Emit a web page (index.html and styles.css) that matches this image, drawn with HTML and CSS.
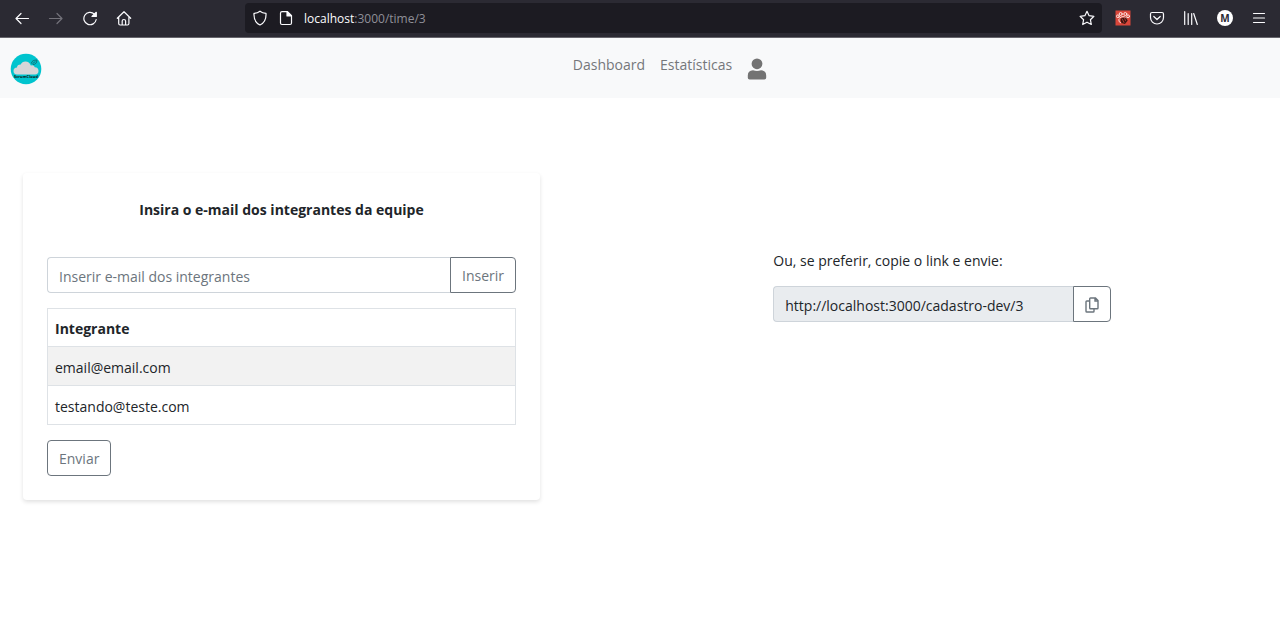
FILE: index.html
```html
<!DOCTYPE html>
<html lang="pt-BR">
<head>
<meta charset="utf-8">
<meta name="viewport" content="width=device-width, initial-scale=1">
<title>Time</title>
<link rel="stylesheet" href="styles.css">
</head>
<body>
<div class="browser-bar">
  <div class="browser-nav">
    <button class="tool" type="button" aria-label="Voltar"><svg viewBox="0 0 16 16"><path d="M14.500 8.500H2M7 3.500L2 8.500l5 5"/></svg></button>
    <button class="tool tool-off" type="button" aria-label="Avançar"><svg viewBox="0 0 16 16"><path d="M1.500 8.500H14M9 3.500l5 5-5 5"/></svg></button>
    <button class="tool" type="button" aria-label="Recarregar"><svg viewBox="0 0 16 16"><path d="M12.300 4A6.200 6.200 0 1 0 14.200 9.500"/><path class="solid" d="M14.300 2.300v4.200H10z"/></svg></button>
    <button class="tool" type="button" aria-label="Início"><svg viewBox="0 0 16 16"><path d="M1.300 8.300L8 1.700l6.700 6.600M2.700 7v6.500q0 1.500 1.500 1.500h7.200q1.500 0 1.500-1.500V7M6.200 15v-4q0-1.500 1.700-1.500t1.700 1.500v4"/></svg></button>
  </div>
  <div class="address">
    <svg class="icon" viewBox="0 0 16 16"><path d="M8 1.200c1.800 1.500 3.700 2 6 2.100C14.300 8.500 12.500 13 8 15 3.500 13 1.700 8.500 2 3.300 4.300 3.200 6.200 2.700 8 1.200z"/></svg>
    <svg class="icon" viewBox="0 0 16 16"><path d="M4 1.700h5.500l4 4V13q0 1.500-1.500 1.500H4Q2.500 14.500 2.500 13V3.200Q2.500 1.700 4 1.700z"/><path class="solid" d="M9 1.700v4.300h4.500z"/></svg>
    <span class="url"><span class="host">localhost</span>:3000/time/3</span>
    <button class="tool" type="button" aria-label="Favoritar"><svg viewBox="0 0 16 16"><path d="M8 1.300l2.100 4.400 4.800.6-3.500 3.400.9 4.800L8 12.200l-4.300 2.300.9-4.800L1.100 6.300l4.800-.6z"/></svg></button>
  </div>
  <div class="extensions">
    <button class="tool" type="button" aria-label="Extensão"><svg viewBox="0 0 16 16"><path fill="#d9463a" stroke="none" d="M.5.500h15v15H.5z"/><g fill="none" stroke="#fbe3df" stroke-width="1"><circle cx="5.700" cy="4" r="1.500"/><circle cx="10.300" cy="4" r="1.500"/><circle cx="2.900" cy="6.300" r="1.400"/><circle cx="13.100" cy="6.300" r="1.400"/><path d="M4.500 8Q8 5 11.500 8M3.800 9.500q-.5 2.500 1.700 3.300"/></g><path fill="#3a1612" stroke="none" d="M6.500 8l4.500-.5 1.700 3L10 14l-3.500-1L5.500 10z"/><path stroke="#d9463a" stroke-width=".7" d="M7.200 9l1.800 3.500M9.500 8l1 2.500"/></svg></button>
    <button class="tool" type="button" aria-label="Pocket"><svg viewBox="0 0 16 16"><path d="M3 2.500h10q1.500 0 1.500 1.500v3.500a6.500 6.500 0 0 1-13 0V4Q1.500 2.500 3 2.500z"/><path d="M4.800 6.500L8 9.500l3.200-3"/></svg></button>
    <button class="tool" type="button" aria-label="Biblioteca"><svg viewBox="0 0 16 16"><path d="M1.700 1.500v13M5.200 3.500v11M8.700 3.500v11M10.700 3.500l3.600 11"/></svg></button>
    <button class="tool profile" type="button" aria-label="Conta">M</button>
    <button class="tool" type="button" aria-label="Menu"><svg viewBox="0 0 16 16"><path d="M2.500 3.500h11M2.500 8h11M2.500 12.500h11"/></svg></button>
  </div>
</div>

<header class="navbar">
  <a class="brand" href="#" aria-label="ScrumCloud">
    <svg viewBox="0 0 32 32"><circle cx="16" cy="16" r="15.300" fill="#00c4ce"/><path fill="#d6d6d8" d="M7 21.500q-3.500-.3-3.500-3.600 0-3 3.500-3.300 0-3 3.700-3Q12 8.500 15.500 8.500q3.800 0 5.300 4 3.200-1 4 1.800 3.700.2 3.700 3.700 0 3.300-3.500 3.500z"/><path fill="none" stroke="#126b70" stroke-width=".9" d="M21.500 10q.5-3 5.500-3-.3 4.500-4 4.500zM23 10.300l2.500-2"/><text x="16" y="25" class="brand-text">ScrumCloud</text></svg>
  </a>
  <nav class="menu">
    <a href="#">Dashboard</a>
    <a href="#">Estatísticas</a>
    <a class="user" href="#" aria-label="Usuário"><svg viewBox="0 0 20 22"><circle cx="10" cy="5.800" r="5.400"/><path d="M6 12.300q4 1.500 8 0 5.200.2 5.200 5.200v2.200q0 1.800-1.800 1.800H2.600q-1.800 0-1.800-1.800v-2.200q0-5 5.200-5.200z"/></svg></a>
  </nav>
</header>

<main class="content">
  <form class="card">
    <h1><label for="email">Insira o e-mail dos integrantes da equipe</label></h1>
    <div class="input-group">
      <input id="email" type="email" placeholder="Inserir e-mail dos integrantes">
      <button class="btn" type="button">Inserir</button>
    </div>
    <table class="members">
      <thead><tr><th scope="col">Integrante</th></tr></thead>
      <tbody>
        <tr><td>email@email.com</td></tr>
        <tr><td>testando@teste.com</td></tr>
      </tbody>
    </table>
    <button class="btn" type="button">Enviar</button>
  </form>
  <section class="share">
    <label for="link">Ou, se preferir, copie o link e envie:</label>
    <div class="input-group">
      <input id="link" type="text" value="http://localhost:3000/cadastro-dev/3" readonly>
      <button class="btn" type="button" aria-label="Copiar link"><svg viewBox="0 0 14 16"><path d="M5.500 1h5L13 3.500V11q0 .8-.8.800H5.500q-.8 0-.8-.8V1.800q0-.8.800-.8zM10 1v3h3M4.700 4H1.800Q1 4 1 4.800v9.400q0 .8.800.8h6.400q.8 0 .8-.8v-2.400"/></svg></button>
    </div>
  </section>
</main>
</body>
</html>
```
FILE: styles.css
```css
* { box-sizing: border-box; }

body {
  margin: 0;
  background: #fff;
  color: #212529;
  font-family: "Segoe UI", "Open Sans", "Noto Sans", sans-serif;
  font-size: 14px;
  line-height: 22px;
}

a { color: inherit; text-decoration: none; }

button, input { font: inherit; }

svg { display: block; }

/* Browser toolbar */
.browser-bar {
  display: flex;
  align-items: center;
  height: 38px;
  padding: 0 13px 2px 14px;
  background: #2b2a33;
  border-bottom: 1px solid #66656c;
  color: #fbfbfe;
}

.browser-nav, .extensions { display: flex; align-items: center; gap: 18px; }
.browser-nav { width: 231px; }

.tool {
  width: 16px;
  height: 16px;
  padding: 0;
  border: 0;
  background: none;
  color: inherit;
}

.tool svg, .icon {
  width: 16px;
  height: 16px;
  fill: none;
  stroke: currentColor;
  stroke-width: 1.2;
  stroke-linecap: round;
  stroke-linejoin: round;
}

.tool svg .solid, .icon .solid { fill: currentColor; }
.tool-off { color: #73727a; }

.address {
  flex: 1;
  display: flex;
  align-items: center;
  gap: 10px;
  height: 30px;
  padding: 0 7px;
  border-radius: 4px;
  background: #1c1b22;
}

.url { flex: 1; padding-top: 2px; color: #8f8f98; font-size: 12px; }
.host { color: #fbfbfe; }

.extensions { margin-left: 13px; }

.profile {
  border-radius: 50%;
  background: #fff;
  color: #2b2a33;
  font-size: 10px;
  font-weight: 700;
  line-height: 16px;
}

/* Site header */
.navbar {
  display: flex;
  align-items: center;
  min-height: 60px;
  padding-left: 10px;
  background: #f8f9fa;
}

.brand { width: 32px; margin-right: 18px; padding-top: 2px; }
.brand-text { font-size: 4px; font-weight: 700; text-anchor: middle; fill: #111; }

.menu {
  flex: 1;
  display: flex;
  justify-content: center;
  gap: 15px;
  padding-bottom: 2px;
  color: #75777a;
}

.user svg { width: 20px; height: 22px; margin-top: 4px; fill: #737373; }

/* Page content */
.content { display: flex; align-items: flex-start; padding: 75px 23px; }

.card {
  width: 41.9%;
  padding: 24px;
  border-radius: 4px;
  box-shadow: 0 2px 4px rgba(0, 0, 0, .12);
}

h1 { margin: 2px 0 36px; font-size: 14px; line-height: 22px; text-align: center; }

.input-group { display: flex; }

.input-group input {
  flex: 1;
  min-width: 0;
  height: 36px;
  padding: 2px 11px 0;
  border: 1px solid #ced4da;
  border-right: 0;
  border-radius: 4px 0 0 4px;
  color: #495057;
}

.input-group input::placeholder { color: #6c757d; opacity: 1; }

.input-group input[readonly] { background: #e9ecef; color: #212529; }

.btn {
  height: 36px;
  padding: 2px 11px 0;
  border: 1px solid #6c757d;
  border-radius: 4px;
  background: #fff;
  color: #6c757d;
}

.btn svg {
  width: 14px;
  height: 16px;
  fill: none;
  stroke: currentColor;
  stroke-width: 1.4;
}

.input-group .btn { border-radius: 0 4px 4px 0; }

.members { width: 100%; margin: 15px 0; border-collapse: collapse; }

.members th, .members td {
  height: 38px;
  padding: 3px 7px 0;
  border: 1px solid #dee2e6;
  text-align: left;
}

.members td { height: 39px; }

.members tbody tr:nth-child(odd) { background: #f2f2f2; }

.share { width: 27.4%; margin: 77px 0 0 18.9%; }
.share label { display: block; margin-bottom: 14px; }
```
